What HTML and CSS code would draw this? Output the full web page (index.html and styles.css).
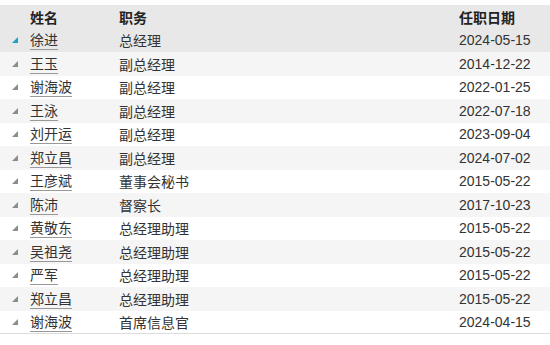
FILE: index.html
```html
<!DOCTYPE html>
<html lang="zh">
<head>
<meta charset="utf-8">
<link rel="stylesheet" href="styles.css">
</head>
<body>
<div class="table">
  <div class="row head">
    <div class="c-icon"></div>
    <div class="c-name">姓名</div>
    <div class="c-pos">职务</div>
    <div class="c-date">任职日期</div>
  </div>
  <div class="row sel"><div class="c-icon"><span class="tri"></span></div><div class="c-name"><span class="nm">徐进</span></div><div class="c-pos">总经理</div><div class="c-date">2024-05-15</div></div>
  <div class="row alt"><div class="c-icon"><span class="tri"></span></div><div class="c-name"><span class="nm">王玉</span></div><div class="c-pos">副总经理</div><div class="c-date">2014-12-22</div></div>
  <div class="row"><div class="c-icon"><span class="tri"></span></div><div class="c-name"><span class="nm">谢海波</span></div><div class="c-pos">副总经理</div><div class="c-date">2022-01-25</div></div>
  <div class="row alt"><div class="c-icon"><span class="tri"></span></div><div class="c-name"><span class="nm">王泳</span></div><div class="c-pos">副总经理</div><div class="c-date">2022-07-18</div></div>
  <div class="row"><div class="c-icon"><span class="tri"></span></div><div class="c-name"><span class="nm">刘开运</span></div><div class="c-pos">副总经理</div><div class="c-date">2023-09-04</div></div>
  <div class="row alt"><div class="c-icon"><span class="tri"></span></div><div class="c-name"><span class="nm">郑立昌</span></div><div class="c-pos">副总经理</div><div class="c-date">2024-07-02</div></div>
  <div class="row"><div class="c-icon"><span class="tri"></span></div><div class="c-name"><span class="nm">王彦斌</span></div><div class="c-pos">董事会秘书</div><div class="c-date">2015-05-22</div></div>
  <div class="row alt"><div class="c-icon"><span class="tri"></span></div><div class="c-name"><span class="nm">陈沛</span></div><div class="c-pos">督察长</div><div class="c-date">2017-10-23</div></div>
  <div class="row"><div class="c-icon"><span class="tri"></span></div><div class="c-name"><span class="nm">黄敬东</span></div><div class="c-pos">总经理助理</div><div class="c-date">2015-05-22</div></div>
  <div class="row alt"><div class="c-icon"><span class="tri"></span></div><div class="c-name"><span class="nm">吴祖尧</span></div><div class="c-pos">总经理助理</div><div class="c-date">2015-05-22</div></div>
  <div class="row"><div class="c-icon"><span class="tri"></span></div><div class="c-name"><span class="nm">严军</span></div><div class="c-pos">总经理助理</div><div class="c-date">2015-05-22</div></div>
  <div class="row alt"><div class="c-icon"><span class="tri"></span></div><div class="c-name"><span class="nm">郑立昌</span></div><div class="c-pos">总经理助理</div><div class="c-date">2015-05-22</div></div>
  <div class="row last"><div class="c-icon"><span class="tri"></span></div><div class="c-name"><span class="nm">谢海波</span></div><div class="c-pos">首席信息官</div><div class="c-date">2024-04-15</div></div>
</div>
</body>
</html>
```
FILE: styles.css
```css
* { box-sizing: border-box; }
html, body { margin: 0; padding: 0; background: #fff; }
body {
  padding-top: 5px;
  font-family: "Noto Sans CJK SC", "Liberation Sans", sans-serif;
  font-size: 14px;
  color: #333;
}
.table { width: 550px; }
.row {
  display: flex;
  align-items: center;
  height: 23.5px;
  background: #fff;
}
.row.head { background: #e8e8e8; font-weight: bold; color: #222; }
.row.sel { background: #e8e8e8; }
.row.alt { background: #f5f5f5; }
.row.last { border-bottom: 1px solid #dcdcdc; }
.c-icon { width: 30px; display: flex; align-items: center; padding-left: 12px; }
.c-name { width: 89px; line-height: 18px; }
.c-pos { width: 340px; line-height: 18px; }
.c-date { flex: 1; line-height: 18px; font-family: "Liberation Sans", "Noto Sans CJK SC", sans-serif; }
.head .c-date { font-family: "Noto Sans CJK SC", sans-serif; }
.nm {
  display: inline-block;
  border-bottom: 1px solid #999;
  padding-bottom: 1px;
  line-height: 18px;
}
.tri {
  display: block;
  width: 0;
  height: 0;
  border-style: solid;
  border-width: 0 0 6px 6px;
  border-color: transparent transparent #8c8c8c transparent;
}
.sel .tri { border-bottom-color: #1ba1c8; }
```
